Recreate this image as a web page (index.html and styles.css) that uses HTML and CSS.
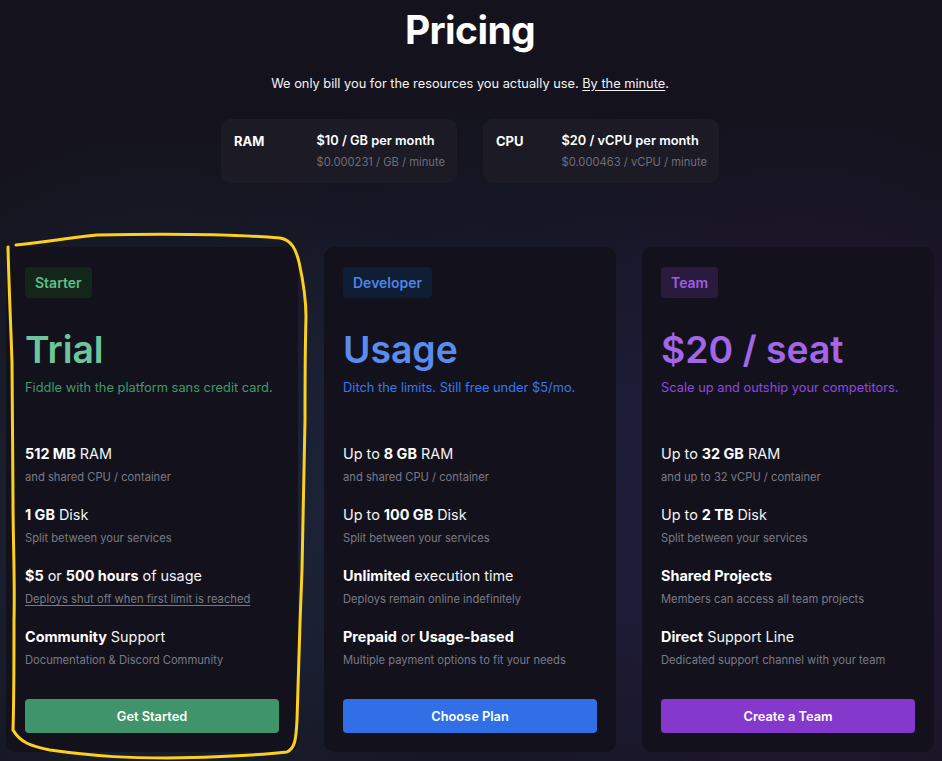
FILE: index.html
```html
<!DOCTYPE html>
<html lang="en">
<head>
<meta charset="utf-8">
<title>Pricing</title>
<link rel="stylesheet" href="styles.css">
</head>
<body>
<main class="page">
  <header class="hero">
    <h1 class="hero-title">Pricing</h1>
    <p class="hero-sub">We only bill you for the resources you actually use. <a class="hero-link" href="#">By the minute</a>.</p>
    <div class="rates">
      <div class="rate">
        <div class="rate-label">RAM</div>
        <div class="rate-price">
          <div class="rate-main">$10 / GB per month</div>
          <div class="rate-minute">$0.000231 / GB / minute</div>
        </div>
      </div>
      <div class="rate">
        <div class="rate-label">CPU</div>
        <div class="rate-price">
          <div class="rate-main">$20 / vCPU per month</div>
          <div class="rate-minute">$0.000463 / vCPU / minute</div>
        </div>
      </div>
    </div>
  </header>

  <section class="plans">
    <article class="plan plan-starter">
      <span class="badge">Starter</span>
      <h2 class="plan-title">Trial</h2>
      <p class="plan-desc">Fiddle with the platform sans credit card.</p>
      <ul class="features">
        <li><div class="f-title"><b>512 MB</b> RAM</div><div class="f-sub">and shared CPU / container</div></li>
        <li><div class="f-title"><b>1 GB</b> Disk</div><div class="f-sub">Split between your services</div></li>
        <li><div class="f-title"><b>$5</b> or <b>500 hours</b> of usage</div><div class="f-sub f-under">Deploys shut off when first limit is reached</div></li>
        <li><div class="f-title"><b>Community</b> Support</div><div class="f-sub">Documentation &amp; Discord Community</div></li>
      </ul>
      <a class="btn" href="#">Get Started</a>
    </article>

    <article class="plan plan-dev">
      <span class="badge">Developer</span>
      <h2 class="plan-title">Usage</h2>
      <p class="plan-desc">Ditch the limits. Still free under $5/mo.</p>
      <ul class="features">
        <li><div class="f-title">Up to <b>8 GB</b> RAM</div><div class="f-sub">and shared CPU / container</div></li>
        <li><div class="f-title">Up to <b>100 GB</b> Disk</div><div class="f-sub">Split between your services</div></li>
        <li><div class="f-title"><b>Unlimited</b> execution time</div><div class="f-sub">Deploys remain online indefinitely</div></li>
        <li><div class="f-title"><b>Prepaid</b> or <b>Usage-based</b></div><div class="f-sub">Multiple payment options to fit your needs</div></li>
      </ul>
      <a class="btn" href="#">Choose Plan</a>
    </article>

    <article class="plan plan-team">
      <span class="badge">Team</span>
      <h2 class="plan-title">$20 / seat</h2>
      <p class="plan-desc">Scale up and outship your competitors.</p>
      <ul class="features">
        <li><div class="f-title">Up to <b>32 GB</b> RAM</div><div class="f-sub">and up to 32 vCPU / container</div></li>
        <li><div class="f-title">Up to <b>2 TB</b> Disk</div><div class="f-sub">Split between your services</div></li>
        <li><div class="f-title"><b>Shared Projects</b></div><div class="f-sub">Members can access all team projects</div></li>
        <li><div class="f-title"><b>Direct</b> Support Line</div><div class="f-sub">Dedicated support channel with your team</div></li>
      </ul>
      <a class="btn" href="#">Create a Team</a>
    </article>
  </section>
</main>

<svg class="annotation" width="942" height="761" viewBox="0 0 942 761" aria-hidden="true">
  <path d="M16,245 C40,243 60,239 97,235 C150,234 230,234 280,238 C292,240 296,250 299,262 C303,280 306,295 306,317 C305,350 305,390 305,420 C304,470 303,520 302,570 C300,620 298,680 297,720 C296,740 295,748 287,752 C260,755 220,757 167,758 C130,758 100,757 50,750 C30,746 20,742 13,730 C14,700 14,660 14,620 C15,580 13,540 13,500 C13,460 12,400 12,363 C11,330 9,290 8,247" fill="none" stroke="#fcd01c" stroke-width="3" stroke-linecap="round" stroke-linejoin="round"/>
</svg>
</body>
</html>
```

FILE: styles.css
```css
* { box-sizing: border-box; }

html, body {
  margin: 0;
  padding: 0;
  height: 761px;
  overflow: hidden;
}

body {
  font-family: Inter, "Noto Sans", sans-serif;
  color: #f4f4f5;
  background-color: #14131d;
  background-image:
    radial-gradient(ellipse 360px 400px at 160px 520px, rgba(38, 52, 78, 0.6), rgba(38, 52, 78, 0) 100%),
    radial-gradient(ellipse 330px 400px at 480px 480px, rgba(30, 40, 80, 0.5), rgba(30, 40, 80, 0) 100%),
    radial-gradient(ellipse 380px 420px at 800px 520px, rgba(55, 35, 90, 0.55), rgba(55, 35, 90, 0) 100%);
  position: relative;
}

.page {
  padding: 6px 8px 0 6px;
}

.hero {
  display: flex;
  flex-direction: column;
  align-items: center;
}

.hero-title {
  margin: 0;
  font-size: 39px;
  line-height: 48px;
  font-weight: 700;
  color: #ffffff;
  letter-spacing: -0.6px;
}

.hero-sub {
  margin: 20px 0 0;
  font-size: 12.8px;
  line-height: 20px;
  color: #f4f4f5;
}

.hero-link {
  color: #f4f4f5;
  text-decoration: underline;
  text-underline-offset: 2px;
}

.rates {
  margin-top: 25px;
  display: flex;
  gap: 26px;
}

.rate {
  width: 236px;
  height: 64px;
  background: #1b1a25;
  border-radius: 9px;
  padding: 13px 12px 0 13px;
  display: flex;
  justify-content: space-between;
}

.rate-label {
  font-size: 13px;
  line-height: 18px;
  font-weight: 700;
  color: #ffffff;
}

.rate-main {
  font-size: 12.8px;
  line-height: 18px;
  font-weight: 600;
  color: #ffffff;
}

.rate-minute {
  margin-top: 4px;
  font-size: 11.2px;
  line-height: 16px;
  color: #6f6e7b;
}

.plans {
  margin-top: 64px;
  display: grid;
  grid-template-columns: repeat(3, 1fr);
  gap: 26px;
}

.plan {
  background: #13121c;
  border-radius: 10px;
  padding: 20px 19px 19px;
  height: 505px;
  display: flex;
  flex-direction: column;
  align-items: flex-start;
}

.badge {
  display: inline-block;
  font-size: 14px;
  line-height: 19px;
  font-weight: 600;
  padding: 6px 10px;
  border-radius: 4px;
}

.plan-title {
  margin: 30px 0 0;
  font-size: 37.3px;
  line-height: 44px;
  font-weight: 600;
  letter-spacing: 0;
}

.plan-desc {
  margin: 6px 0 0;
  font-size: 12.85px;
  line-height: 20px;
}

.features {
  list-style: none;
  margin: 46px 0 0;
  padding: 0;
  display: flex;
  flex-direction: column;
  gap: 20px;
}

.f-title {
  font-size: 14.4px;
  line-height: 20px;
  color: #f4f4f5;
}

.f-title b {
  font-weight: 700;
  color: #ffffff;
}

.f-sub {
  margin-top: 5px;
  font-size: 11.2px;
  line-height: 16px;
  color: #7a7a87;
}

.f-under {
  text-decoration: underline;
  text-underline-offset: 2px;
}

.btn {
  margin-top: auto;
  align-self: stretch;
  height: 34px;
  border-radius: 4px;
  display: flex;
  align-items: center;
  justify-content: center;
  font-size: 12.8px;
  font-weight: 600;
  color: #ffffff;
  text-decoration: none;
}

.plan-starter .badge { background: #142519; color: #5cbf8c; }
.plan-starter .plan-title { color: #6ec59c; }
.plan-starter .plan-desc { color: #3d9c6a; }
.plan-starter .btn { background: #40946b; }

.plan-dev .badge { background: #0f1d35; color: #4d84e6; }
.plan-dev .plan-title { color: #5a8cef; }
.plan-dev .plan-desc { color: #3a77ef; }
.plan-dev .btn { background: #306fe5; }

.plan-team .badge { background: #2a1a3e; color: #9d5fe0; }
.plan-team .plan-title { color: #a466e9; }
.plan-team .plan-desc { color: #9148e0; }
.plan-team .btn { background: #8538cc; }

.annotation {
  position: absolute;
  top: 0;
  left: 0;
  pointer-events: none;
}
```
